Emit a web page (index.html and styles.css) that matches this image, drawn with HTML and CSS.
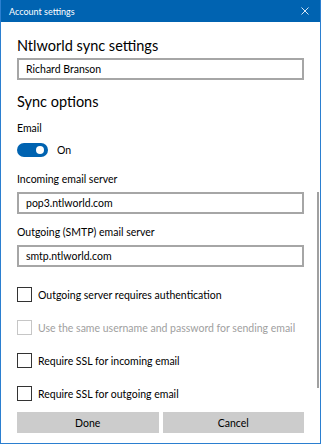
FILE: index.html
```html
<html lang="en">
<head>
    <meta charset="UTF-8">
    <meta name="viewport" content="width=device-width, initial-scale=1.0">
    <title>Account settings</title>
    <link rel="stylesheet" href="styles.css">
</head>
<body>
    <div class="window">
        <div class="titlebar">
            <span class="title">Account settings</span>
            <svg class="close" width="8" height="8" viewBox="0 0 8 8">
                <path d="M0.5 0.5 L7.5 7.5 M7.5 0.5 L0.5 7.5" stroke="#d6e6f5" stroke-width="1" fill="none"/>
            </svg>
        </div>
        <div class="content">
            <h1 class="heading">Ntlworld sync settings</h1>
            <div class="textbox">Richard Branson</div>

            <h1 class="heading sync">Sync options</h1>
            <div class="label email-label">Email</div>
            <div class="toggle-row">
                <div class="toggle"><div class="knob"></div></div>
                <span>On</span>
            </div>

            <div class="label server-label">Incoming email server</div>
            <div class="textbox short">pop3.ntlworld.com</div>
            <div class="label smtp-label">Outgoing (SMTP) email server</div>
            <div class="textbox short">smtp.ntlworld.com</div>

            <div class="checks">
                <div class="check"><div class="box"></div>Outgoing server requires authentication</div>
                <div class="check disabled"><div class="box"></div>Use the same username and password for sending email</div>
                <div class="check"><div class="box"></div>Require SSL for incoming email</div>
                <div class="check"><div class="box"></div>Require SSL for outgoing email</div>
            </div>

            <div class="buttons">
                <button>Done</button>
                <button>Cancel</button>
            </div>
        </div>
        <div class="scrollbar"></div>
    </div>
</body>
</html>
```

FILE: styles.css
```css
body {
    margin: 0;
    padding: 0;
    font-family: Lato, "Open Sans", sans-serif;
    background-color: #ffffff;
}
.window {
    position: relative;
    width: 321px;
    height: 444px;
    box-sizing: border-box;
    border: 1px solid #2b7fd0;
    border-top: none;
    overflow: hidden;
}
.titlebar {
    height: 22px;
    margin: 0 -1px;
    background-color: #0063b1;
    color: #ffffff;
    display: flex;
    align-items: center;
    justify-content: space-between;
    padding: 0 12px 0 9px;
}
.title {
    font-size: 9px;
}
.close {
    display: block;
}
.content {
    padding: 0 16px 0 16px;
}
.heading {
    font-size: 14.5px;
    font-weight: normal;
    line-height: 24px;
    margin: 12px 0 0;
    color: #000000;
}
.heading.sync {
    margin-top: 10px;
}
.textbox {
    height: 22px;
    box-sizing: border-box;
    border: 2px solid #a6a6a6;
    font-size: 10.5px;
    line-height: 18px;
    padding-left: 7px;
}
.label {
    font-size: 10.5px;
    line-height: 16px;
}
.email-label {
    margin-top: 6px;
}
.toggle-row {
    display: flex;
    align-items: center;
    height: 14px;
    margin-top: 7px;
    font-size: 10.5px;
}
.toggle {
    width: 31px;
    height: 14px;
    border-radius: 7px;
    background-color: #0063b1;
    position: relative;
    margin-right: 9px;
}
.knob {
    position: absolute;
    right: 4px;
    top: 3px;
    width: 8px;
    height: 8px;
    border-radius: 50%;
    background-color: #ffffff;
}
.server-label {
    margin-top: 14px;
}
.label + .textbox {
    margin-top: 5px;
}
.smtp-label {
    margin-top: 10px;
}
.checks {
    margin-top: 20px;
    display: flex;
    flex-direction: column;
    gap: 18px;
}
.check {
    display: flex;
    align-items: center;
    height: 15px;
    font-size: 10.5px;
    color: #000000;
    white-space: nowrap;
}
.box {
    width: 15px;
    height: 15px;
    box-sizing: border-box;
    border: 1.5px solid #333333;
    margin-right: 6px;
}
.check.disabled {
    color: #a0a0a0;
}
.check.disabled .box {
    border-color: #c6c6c6;
}
.buttons {
    display: flex;
    gap: 4px;
    margin-top: 11px;
}
button {
    flex: 1;
    height: 21px;
    border: none;
    background-color: #cccccc;
    font-family: inherit;
    font-size: 10.5px;
    color: #000000;
    padding: 0;
}
.scrollbar {
    position: absolute;
    left: 316px;
    top: 192px;
    width: 2px;
    height: 196px;
    background-color: #a0a0a0;
}
```
